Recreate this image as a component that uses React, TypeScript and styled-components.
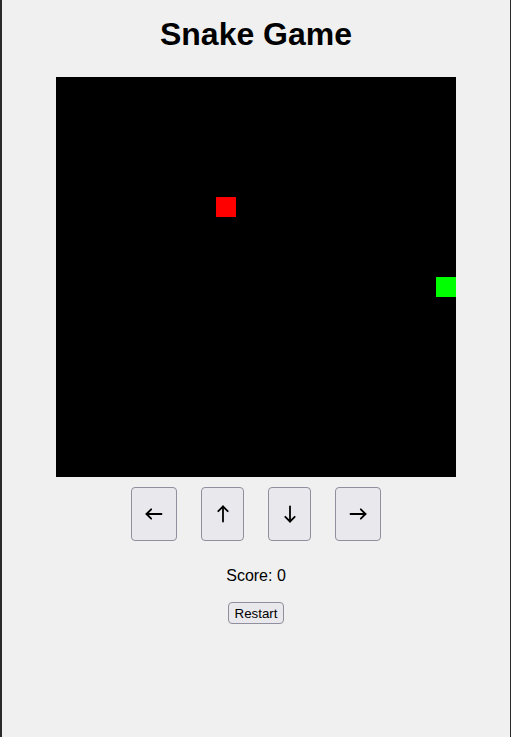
import React, { useState } from "react";
import styled, { createGlobalStyle } from "styled-components";

const GlobalStyle = createGlobalStyle`
  html, body {
    margin: 0;
    padding: 0;
    height: 100%;
    background: #f0f0f0;
  }
  body {
    font-family: "Liberation Sans", Arial, sans-serif;
    color: #000;
  }
  #root {
    min-height: 100%;
  }
`;

const Frame = styled.div`
  box-sizing: border-box;
  min-height: 737px;
  border-left: 2px solid #2a2a2a;
  border-right: 1px solid #2a2a2a;
  background: #f0f0f0;
  display: flex;
  flex-direction: column;
  align-items: center;
`;

const Title = styled.h1`
  font-family: "Liberation Sans", Arial, sans-serif;
  font-weight: 700;
  font-size: 32px;
  line-height: 37px;
  margin: 16px 0 24px;
`;

const Board = styled.div`
  position: relative;
  width: 400px;
  height: 400px;
  background: #000;
`;

const Cell = styled.div<{ $color: string }>`
  position: absolute;
  width: 20px;
  height: 20px;
  background: ${(p) => p.$color};
`;

const Controls = styled.div`
  display: flex;
  gap: 24px;
  margin-top: 10px;
`;

const ArrowButton = styled.button<{ $wide?: boolean }>`
  box-sizing: border-box;
  width: ${(p) => (p.$wide ? "46px" : "43px")};
  height: 54px;
  padding: 0;
  display: flex;
  align-items: center;
  justify-content: center;
  background: #e9e9ed;
  border: 1px solid #8f8f9d;
  border-radius: 4px;
  color: #000;
  cursor: pointer;
`;

const Score = styled.p`
  font-family: "Liberation Sans", Arial, sans-serif;
  font-size: 16px;
  line-height: 18px;
  margin: 26px 0 17px;
`;

const RestartButton = styled.button`
  box-sizing: border-box;
  height: 22px;
  padding: 0 6px;
  background: #e9e9ed;
  border: 1px solid #8f8f9d;
  border-radius: 4px;
  font-family: "Liberation Sans", Arial, sans-serif;
  font-size: 13.33px;
  color: #000;
  cursor: pointer;
`;

type Dir = "left" | "up" | "down" | "right";

const rotation: Record<Dir, number> = { left: 0, up: 90, right: 180, down: 270 };

function Arrow({ dir }: { dir: Dir }) {
  return (
    <svg
      width={18}
      height={18}
      viewBox="0 0 18 18"
      fill="none"
      stroke="#000"
      strokeWidth={1.8}
      strokeLinecap="round"
      strokeLinejoin="round"
      style={{ transform: `rotate(${rotation[dir]}deg)` }}
    >
      <line x1={1.5} y1={9} x2={16.5} y2={9} />
      <polyline points="6.2,4.3 1.5,9 6.2,13.7" />
    </svg>
  );
}

export default function App() {
  const [score] = useState(0);
  const food = { x: 8, y: 6 };
  const snake = [{ x: 19, y: 10 }];
  const dirs: { d: Dir; label: string }[] = [
    { d: "left", label: "Left" },
    { d: "up", label: "Up" },
    { d: "down", label: "Down" },
    { d: "right", label: "Right" },
  ];
  return (
    <>
      <GlobalStyle />
      <Frame>
        <Title>Snake Game</Title>
        <Board>
          <Cell $color="#ff0000" style={{ left: food.x * 20, top: food.y * 20 }} />
          {snake.map((s, i) => (
            <Cell key={i} $color="#00ff00" style={{ left: s.x * 20, top: s.y * 20 }} />
          ))}
        </Board>
        <Controls>
          {dirs.map(({ d, label }) => (
            <ArrowButton key={d} $wide={d === "left" || d === "right"} aria-label={label}>
              <Arrow dir={d} />
            </ArrowButton>
          ))}
        </Controls>
        <Score>Score: {score}</Score>
        <RestartButton>Restart</RestartButton>
      </Frame>
    </>
  );
}
